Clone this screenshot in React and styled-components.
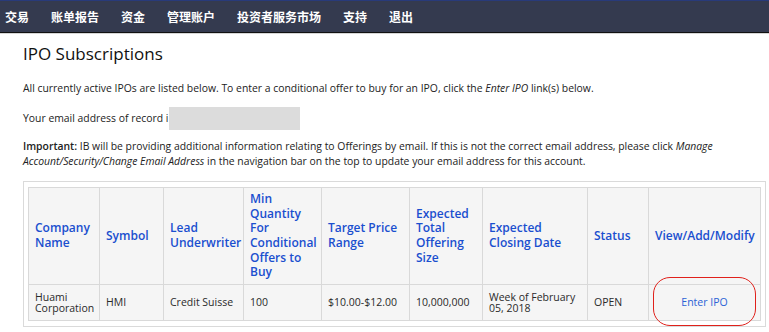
import React from 'react';
import styled, { createGlobalStyle } from 'styled-components';

const GlobalStyle = createGlobalStyle`
  body {
    margin: 0;
    background: #fff;
    font-family: "Open Sans", "Noto Sans CJK SC", sans-serif;
  }
`

const NavBar = styled.div`
  display: flex;
  align-items: center;
  height: 31px;
  background: #343a4f;
  border-top: 1px solid #283a7a;
  border-bottom: 1px solid #111;
  box-shadow: 0 1px 0 #d6d6d6;
  padding-left: 5px;
`

const NavItem = styled.span`
  color: #fff;
  font-family: "Noto Sans CJK SC", sans-serif;
  font-weight: 700;
  font-size: 12px;
  margin-right: 22px;
`

const Content = styled.div`
  padding: 0 3px 0 23px;
`

const Title = styled.h1`
  margin: 10px 0 0;
  font-size: 17px;
  font-weight: 500;
  color: #111;
  line-height: 22px;
`

const Para = styled.p`
  margin: ${p => p.top || 0}px 0 0;
  font-size: 10.4px;
  line-height: 15px;
  color: #222;
  display: flex;
  align-items: center;
`

const Block = styled.p`
  margin: ${p => p.top || 0}px 0 0;
  font-size: 10.4px;
  line-height: 15px;
  color: #222;
  padding-right: 20px;
`

const Masked = styled.span`
  display: inline-block;
  width: 131px;
  height: 23px;
  background: #dcdcdc;
  margin-left: 1px;
`

const Frame = styled.div`
  position: relative;
  margin-top: 12px;
  border: 1px solid #dadada;
  padding: 5px 6px 5px 4px;
`

const Table = styled.table`
  border-collapse: collapse;
  table-layout: fixed;
  width: 732px;
  background: #f5f5f5;
`

const Th = styled.th`
  box-sizing: border-box;
  width: ${p => p.w}px;
  height: 97px;
  border: 1px solid #d9d9d9;
  padding: 0 6px;
  text-align: ${p => (p.center ? 'center' : 'left')};
  vertical-align: middle;
  color: #1a4fcf;
  font-size: 12px;
  font-weight: 600;
  line-height: 14.6px;
`

const Td = styled.td`
  height: 35px;
  border: 1px solid #d9d9d9;
  padding: 0 6px;
  text-align: ${p => (p.center ? 'center' : 'left')};
  vertical-align: middle;
  color: #2a2a2a;
  font-size: 10.5px;
  line-height: 11px;
`

const Link = styled.a`
  color: #2a62d6;
  text-decoration: none;
`

const Circle = styled.div`
  position: absolute;
  left: 629px;
  top: 95px;
  width: 101px;
  height: 47px;
  border: 1.5px solid #e0211b;
  border-radius: 17px;
  pointer-events: none;
`

const menu = ['交易', '账单报告', '资金', '管理账户', '投资者服务市场', '支持', '退出'];

const cols = [
  { w: 71, label: 'Company Name' },
  { w: 64, label: 'Symbol' },
  { w: 80, label: 'Lead Underwriter' },
  { w: 78, label: 'Min Quantity For Conditional Offers to Buy' },
  { w: 88, label: 'Target Price Range' },
  { w: 73, label: 'Expected Total Offering Size' },
  { w: 105, label: 'Expected Closing Date' },
  { w: 61, label: 'Status' },
  { w: 112, label: 'View/Add/Modify', center: true },
];

const row = ['Huami Corporation', 'HMI', 'Credit Suisse', '100', '$10.00-$12.00', '10,000,000', 'Week of February 05, 2018', 'OPEN'];

function App() {
  return (
    <>
      <GlobalStyle />
      <NavBar>
        {menu.map(m => <NavItem key={m}>{m}</NavItem>)}
      </NavBar>
      <Content>
        <Title>IPO Subscriptions</Title>
        <Block top={16}>
          All currently active IPOs are listed below. To enter a conditional offer to buy for an IPO, click the <em>Enter IPO</em> link(s) below.
        </Block>
        <Para top={11}>
          Your email address of record i<Masked />
        </Para>
        <Block top={9}>
          <b style={{ fontWeight: 600 }}>Important:</b> IB will be providing additional information relating to Offerings by email. If this is not the correct email address, please click <em>Manage Account/Security/Change Email Address</em> in the navigation bar on the top to update your email address for this account.
        </Block>
        <Frame>
          <Table>
            <thead>
              <tr>
                {cols.map(c => <Th key={c.label} w={c.w} center={c.center}>{c.label}</Th>)}
              </tr>
            </thead>
            <tbody>
              <tr>
                {row.map(v => <Td key={v}>{v}</Td>)}
                <Td center><Link href="#">Enter IPO</Link></Td>
              </tr>
            </tbody>
          </Table>
          <Circle />
        </Frame>
      </Content>
    </>
  );
}

export default App;
